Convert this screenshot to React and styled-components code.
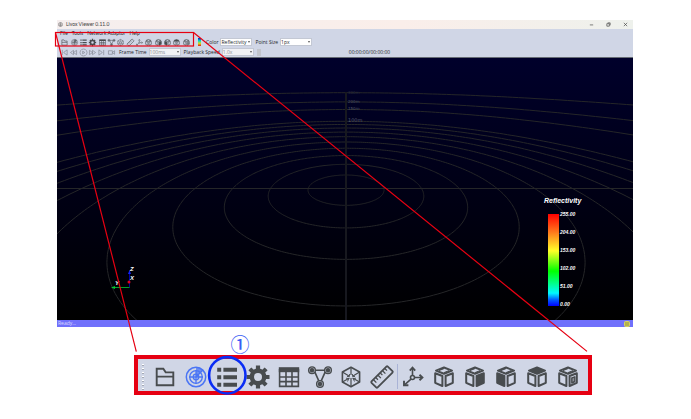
import React from "react";
import styled, { createGlobalStyle } from "styled-components";

const INK = "#484c4f";

const RING_RADII = [1, 2, 3, 4, 5, 6, 7, 8, 9, 10, 15, 20, 30];

// ground circle of radius r seen in perspective
function ringPath(r) {
  let d = "";
  let pen = false;
  for (let i = 0; i <= 360; i++) {
    const a = (i * Math.PI) / 180;
    const depth = 1 + 0.123 * r * Math.cos(a);
    if (depth < 0.12) {
      pen = false;
      continue;
    }
    const x = 346 + (37.7 * r * Math.sin(a)) / depth;
    const y = 66.8 + 121.5 / depth;
    d += `${pen ? "L" : "M"}${x.toFixed(1)} ${y.toFixed(1)}`;
    pen = true;
  }
  return d;
}

function Cube({ top, left, right, part }) {
  return (
    <g stroke={INK} strokeWidth="2" strokeLinejoin="round" fill="none">
      <path d="M11 1.5 19 4.6 11 7.7 3 4.6Z" fill={top ? INK : "none"} />
      {!top && <path d="M6 4.6 11 2.6M16 4.6 11 6.6" strokeWidth="1" />}
      <path d="M2.2 7.2 9.4 10V20L2.2 16.8Z" fill={left ? INK : "none"} />
      <path d="M19.8 7.2 12.6 10V20L19.8 16.8Z" fill={right ? INK : "none"} />
      {part && <path d="M14.8 12 17.8 10.8V15.5L14.8 17Z" fill="#8d9099" strokeWidth="1.4" />}
    </g>
  );
}

const TOOLS = [
  {
    name: "Open folder",
    art: <path d="M2.7 19.2V2.8h6.6l2.4 3.6h7.6v12.8H2.7ZM3 10.6h16" fill="none" stroke={INK} strokeWidth="1.9" />,
  },
  {
    name: "Radar",
    active: true,
    art: (tint) => (
      <g fill="none" stroke={tint} strokeWidth="1.3">
        <path d="M11 11V1a10 10 0 0 1 7 3Z" fill={tint} stroke="none" opacity=".75" />
        <circle cx="11" cy="11" r="9.7" strokeWidth="1.5" />
        <circle cx="11" cy="11" r="6.3" />
        <circle cx="11" cy="11" r="2.8" />
        <path d="M11 4v14M4 11h14M11 11l7-7" />
      </g>
    ),
  },
  {
    name: "List",
    art: (
      <path
        d="M1.2 1.7h4v4h-4zM7.4 1.7H21v4H7.4zM1.2 9.2h4v4h-4zM7.4 9.2H21v4H7.4zM1.2 16.7h4v4h-4zM7.4 16.7H21v4H7.4z"
        fill={INK}
      />
    ),
  },
  {
    name: "Settings",
    art: (
      <g fill="none" stroke={INK}>
        <circle cx="11" cy="11" r="6.2" strokeWidth="4.4" />
        {[0, 45, 90, 135].map((a) => (
          <path key={a} d="M11-.5v4.5M11 18v4.5" strokeWidth="4.2" transform={`rotate(${a} 11 11)`} />
        ))}
      </g>
    ),
  },
  {
    name: "Table",
    art: (
      <g fill="none" stroke={INK}>
        <path d="M.8 1.2h20.4v5H.8z" fill={INK} stroke="none" />
        <path d="M1.6 3v17.4h18.8V3M2 11h18M2 15.6h18M8 6v14M14 6v14" strokeWidth="1.6" />
      </g>
    ),
  },
  {
    name: "Network",
    art: (
      <g fill="none" stroke={INK} strokeWidth="1.6">
        <path d="M5 4.2h12L11 17.5Z" />
        {[[3, 4.2], [19, 4.2], [11, 18]].map(([x, y]) => (
          <g key={x}>
            <circle cx={x} cy={y} r="3.4" fill="#aeb3be" strokeWidth="1.3" />
            <circle cx={x} cy={y} r="1.4" fill={INK} />
          </g>
        ))}
      </g>
    ),
  },
  {
    name: "Point cloud",
    art: (
      <g fill="none" stroke={INK} strokeWidth="1.6" strokeLinejoin="round">
        <path d="M11 1.3 19.6 6v10L11 20.7 2.4 16V6Z" />
        <path d="M11 2v7M11 12v8M2.4 6 9 10M19.6 6 13 10M2.4 16 9.5 12M19.6 16 12.5 12" strokeWidth="1.2" />
        <path d="M7 10.5h2.5V8M15 10.5h-2.5V8M7.5 15.5 8.8 12.6 6 12.2M14.5 15.5 13.2 12.6 16 12.2" strokeWidth=".9" />
      </g>
    ),
  },
  {
    name: "Ruler",
    art: (
      <g transform="rotate(-45 11 11)" fill="none" stroke={INK} strokeWidth="1.8">
        <rect x="-.5" y="6.7" width="23" height="8.6" rx="1" />
        <path d="M3 7v4M6.2 7v3M9.4 7v4M12.6 7v3M15.8 7v4M19 7v3" strokeWidth="1.3" />
      </g>
    ),
  },
  {
    name: "Axes",
    split: true,
    art: (
      <g fill="none" stroke={INK} strokeWidth="1.6">
        <path d="M10.5 9V2M13 11.5h7M9 13.2 2.5 18.8" />
        <circle cx="10.5" cy="11.5" r="2" />
        <path d="M7.8 4.6 10.5 1.7 13.2 4.6M17.5 8.8 20.4 11.5 17.5 14.2M2 14.8V19.2H6.4" strokeWidth="1.9" />
      </g>
    ),
  },
  { name: "Default view", art: <Cube /> },
  { name: "Right view", art: <Cube right /> },
  { name: "Left view", art: <Cube left /> },
  { name: "Top view", art: <Cube top /> },
  { name: "Partial view", art: <Cube part /> },
];

const PLAYBACK = [
  { name: "First frame", d: "M3 2v12M14 2 6 8l8 6Z" },
  { name: "Rewind", d: "M8 3 1 8l7 5ZM15 3 8 8l7 5Z" },
  { name: "Play", d: "M8 0a8 8 0 1 0 .1 0M6 5l5 3-5 3Z" },
  { name: "Forward", d: "M8 3l7 5-7 5ZM1 3l7 5-7 5Z" },
  { name: "Last frame", d: "M13 2v12M2 2l8 6-8 6Z" },
  { name: "Record", d: "M1 4h9v8H1ZM10 8l5-4v8Z" },
];

function ToolButtons({ live }) {
  return TOOLS.map(({ name, art, active, split }) => (
    <ToolButton key={name} type="button" aria-label={name} $split={live && split}>
      <ToolIcon viewBox="0 0 22 22" $large={live}>
        {typeof art === "function" ? art(live && active ? "#4b75f4" : INK) : art}
      </ToolIcon>
    </ToolButton>
  ));
}

function Field({ id, label, value, muted }) {
  return (
    <FieldBox>
      <label htmlFor={id}>{label}</label>
      <SelectBox>
        <Select id={id} defaultValue={value} $muted={muted}>
          <option>{value}</option>
        </Select>
      </SelectBox>
    </FieldBox>
  );
}

function Scene() {
  return (
    <SceneBox>
      <SceneArt viewBox="57 58 576 262">
        <defs>
          <linearGradient id="sky" x1="0" y1="0" x2="0" y2="1">
            <stop offset="0" stopColor="#00002b" />
            <stop offset="1" stopColor="#000000" />
          </linearGradient>
        </defs>
        <rect x="57" y="58" width="576" height="262" fill="url(#sky)" />
        <g fill="none" stroke="#252628" strokeWidth="1">
          {RING_RADII.map((r) => (
            <path key={r} d={ringPath(r)} />
          ))}
          <path d="M57 188.5H633" />
          <path d="M346 92V320" stroke="#17181f" strokeWidth="2" />
        </g>
        <g fill="#55586a" fontFamily="DejaVu Sans" fontSize="4">
          <text x="348" y="94" fill="#2d2f40">300m</text>
          <text x="348" y="103">200m</text>
          <text x="348" y="110">150m</text>
          <text x="348" y="122" fontSize="5">100m</text>
        </g>
        <path d="M129.5 287.5V273" stroke="#0000a8" />
        <path d="M129.5 287.5H112" stroke="#00a028" />
        <path d="M111 287.5l4-1.5v3Z" fill="#00c832" />
        <path d="M129.5 270l1.5 4h-3Z" fill="#1020ff" />
        <circle cx="129" cy="282" r="1.5" fill="#e00020" />
        <g fill="#fff" fontFamily="Liberation Sans" fontStyle="italic" fontWeight="bold" fontSize="6">
          <text x="130" y="271">Z</text>
          <text x="130" y="280">X</text>
          <text x="115" y="285">Y</text>
        </g>
      </SceneArt>
      <Legend>
        <LegendTitle>Reflectivity</LegendTitle>
        <LegendBody>
          <LegendBar />
          <LegendScale>
            {["255.00", "204.00", "153.00", "102.00", "51.00", "0.00"].map((v) => (
              <span key={v}>{v}</span>
            ))}
          </LegendScale>
        </LegendBody>
      </Legend>
    </SceneBox>
  );
}

export default function App() {
  return (
    <Figure>
      <GlobalStyle />
      <Viewer>
        <TitleBar>
          <AppIcon viewBox="0 0 12 12">
            <circle cx="6" cy="6" r="5" />
            <path d="M2 5h8M2 8h8M6 1v10" />
          </AppIcon>
          <Title>Livox Viewer 0.11.0</Title>
          <WindowButton type="button" aria-label="Minimize">
            <svg viewBox="0 0 6 6"><path d="M1 3.5h4" /></svg>
          </WindowButton>
          <WindowButton type="button" aria-label="Restore">
            <svg viewBox="0 0 6 6"><path d="M1 2h3v3H1ZM2 1h3v3" /></svg>
          </WindowButton>
          <WindowButton type="button" aria-label="Close">
            <svg viewBox="0 0 6 6"><path d="M1 1l4 4M5 1 1 5" /></svg>
          </WindowButton>
        </TitleBar>
        <Controls>
          <MenuBar>
            {["File", "Tools", "Network Adaptor", "Help"].map((item) => (
              <button key={item} type="button">{item}</button>
            ))}
          </MenuBar>
          <ControlRow>
            <MiniTools>
              <ToolButtons />
            </MiniTools>
            <ColorStrip />
            <Field id="color" label="Color" value="Reflectivity" />
            <Field id="size" label="Point Size" value="1px" />
          </ControlRow>
          <ControlRow>
            <PlaybackTools>
              {PLAYBACK.map(({ name, d }) => (
                <ToolButton key={name} type="button" aria-label={name}>
                  <PlaybackIcon viewBox="0 0 16 16">
                    <path d={d} />
                  </PlaybackIcon>
                </ToolButton>
              ))}
            </PlaybackTools>
            <Field id="frame" label="Frame Time" value="100ms" muted />
            <Field id="speed" label="Playback Speed" value="1.0x" muted />
            <Seek type="range" min="0" max="100" defaultValue="0" aria-label="Playback position" />
            <Clock>00:00:00/00:00:00</Clock>
          </ControlRow>
        </Controls>
        <Scene />
        <StatusBar>
          <span>Ready...</span>
          <svg viewBox="0 0 6 6" width="6" height="6">
            <rect width="6" height="6" rx="2" fill="#d8d45a" />
            <path d="M1 2h4M1 4h4" stroke="#8f8c48" />
          </svg>
        </StatusBar>
      </Viewer>
      <Callout>
        <Grip />
        <CalloutTools>
          <ToolButtons live />
        </CalloutTools>
      </Callout>
      <Marks viewBox="0 0 691 419" preserveAspectRatio="none">
        <g fill="none" stroke="#e60012">
          <rect x="55.5" y="32.5" width="138" height="13.5" strokeWidth="1.2" />
          <path d="M55.5 32.5 136.3 351.6M193.5 32.5 587 351.4" strokeWidth="1.2" />
        </g>
        <circle cx="227.3" cy="375.3" r="18.2" fill="none" stroke="#0a2df5" strokeWidth="2.6" />
        <text
          x="240"
          y="352"
          textAnchor="middle"
          fontSize="19"
          fontWeight="500"
          fill="#3a5cf5"
          fontFamily="Noto Sans CJK JP, sans-serif"
        >
          ①
        </text>
      </Marks>
    </Figure>
  );
}

const GlobalStyle = createGlobalStyle`
  * {
    box-sizing: border-box;
  }
  body {
    margin: 0;
    background: #fff;
    font: 5px/7px "Open Sans", sans-serif;
    color: #25272b;
  }
  button {
    padding: 0;
    border: 0;
    background: none;
    color: inherit;
    font: inherit;
  }
`;

const Figure = styled.main`
  position: relative;
  padding: 20px 58px 24px 57px;
`;

const Viewer = styled.section`
  display: flex;
  flex-direction: column;
`;

const TitleBar = styled.header`
  display: flex;
  align-items: center;
  height: 9px;
  padding: 0 5px 0 1px;
  background: linear-gradient(90deg, #f5eeee, #faeeea 60%, #eef1ec);
`;

const AppIcon = styled.svg`
  width: 5px;
  height: 5px;
  margin-right: 3px;
  fill: none;
  stroke: #555;
`;

const Title = styled.h1`
  flex: 1;
  margin: 0;
  color: #3c3c40;
  font-family: Lato, sans-serif;
  font-size: 5px;
  font-weight: 400;
`;

const WindowButton = styled.button`
  display: flex;
  margin-left: 12px;

  svg {
    width: 5px;
    height: 5px;
    fill: none;
    stroke: #444;
    stroke-width: 0.8;
  }
`;

const Controls = styled.div`
  background: #d0d6e6;
  border-bottom: 1px solid #666c74;
`;

const MenuBar = styled.nav`
  display: flex;
  align-items: center;
  gap: 4px;
  height: 8px;
  padding: 1px 3px 0;
  font-family: Lato, sans-serif;
`;

const ControlRow = styled.div`
  display: flex;
  align-items: center;
  height: 10px;
  padding-left: 3px;
`;

const MiniTools = styled.div`
  display: grid;
  grid-template-columns: repeat(14, 1fr);
  width: 131px;
  margin-right: 7px;
`;

const PlaybackTools = styled(MiniTools)`
  grid-template-columns: repeat(6, 1fr);
  width: 56px;
  margin-right: 3px;
`;

const ToolButton = styled.button`
  display: flex;
  align-items: center;
  justify-content: center;
  ${(p) => p.$split && "box-shadow: -1px 0 #a9b3d6;"}
`;

const ToolIcon = styled.svg`
  width: ${(p) => (p.$large ? 22 : 7)}px;
  height: ${(p) => (p.$large ? 22 : 7)}px;
  overflow: visible;
`;

const PlaybackIcon = styled.svg`
  width: 7px;
  height: 7px;
  overflow: visible;
  fill: none;
  stroke: #80858f;
  stroke-width: 1.5;
`;

const ColorStrip = styled.span`
  width: 3px;
  height: 8px;
  margin-right: 5px;
  background: linear-gradient(#0018d0, #00d8c8, #d8e020, #e02010);
`;

const FieldBox = styled.div`
  display: flex;
  align-items: center;
  gap: 2px;
  margin-right: 3px;
  white-space: nowrap;
`;

const SelectBox = styled.div`
  position: relative;
  display: flex;

  &::after {
    content: "";
    position: absolute;
    top: 3px;
    right: 2px;
    border: 1px solid transparent;
    border-top: 2px solid #555;
    pointer-events: none;
  }
`;

const Select = styled.select`
  appearance: none;
  width: 32px;
  height: 8px;
  padding: 0;
  border: 1px solid #c3c8d4;
  border-radius: 0;
  background: ${(p) => (p.$muted ? "#f1f2f5" : "#fff")};
  color: ${(p) => (p.$muted ? "#8a8d94" : "#25272b")};
  font: inherit;
  line-height: 6px;
`;

const Seek = styled.input`
  appearance: none;
  width: 90px;
  height: 7px;
  margin: 0 2px 0 0;
  background: none;

  &::-webkit-slider-thumb {
    appearance: none;
    width: 4px;
    height: 7px;
    background: #c2c5cc;
  }
`;

const Clock = styled.time`
  white-space: nowrap;
`;

const SceneBox = styled.div`
  position: relative;
`;

const SceneArt = styled.svg`
  display: block;
  width: 100%;
`;

const Legend = styled.div`
  position: absolute;
  right: 51px;
  bottom: 12px;
  width: 38px;
  color: #fff;
  font: italic bold 5px/7px "Liberation Sans", sans-serif;
`;

const LegendTitle = styled.div`
  margin-bottom: 5px;
  font-size: 7px;
  line-height: 10px;
`;

const LegendBody = styled.div`
  display: flex;
  gap: 1px;
  margin-left: 4px;
`;

const LegendBar = styled.div`
  width: 11px;
  height: 92px;
  margin: 3px 0 2px;
  background: linear-gradient(#f00, #ff7a1c 20%, #ffff28 40%, #00ff00 62%, #00ff90 76%, #00f8ff 86%, #0060ff 93%, #0000ff);
`;

const LegendScale = styled.div`
  display: flex;
  flex-direction: column;
  justify-content: space-between;
`;

const StatusBar = styled.footer`
  display: flex;
  align-items: center;
  justify-content: space-between;
  height: 7px;
  padding: 0 3px 0 1px;
  background: #7070fb;
  color: #dcdcff;
`;

const Callout = styled.section`
  display: flex;
  height: 40px;
  margin: 28px 41px 0 77px;
  padding: 2px 4px 0;
  border: 4px solid #e60012;
  background: #d0d6e6;
`;

const Grip = styled.span`
  width: 2px;
  margin: 3px 5px 1px 0;
  background: repeating-linear-gradient(#fff 0 1px, #a4a9b6 1px 2px, transparent 2px 4px);
`;

const CalloutTools = styled.div`
  flex: 1;
  display: grid;
  grid-template-columns: repeat(14, 1fr);
  padding: 3px 0 2px;
`;

const Marks = styled.svg`
  position: absolute;
  top: 0;
  left: 0;
  width: 100%;
  height: 100%;
  pointer-events: none;
`;
